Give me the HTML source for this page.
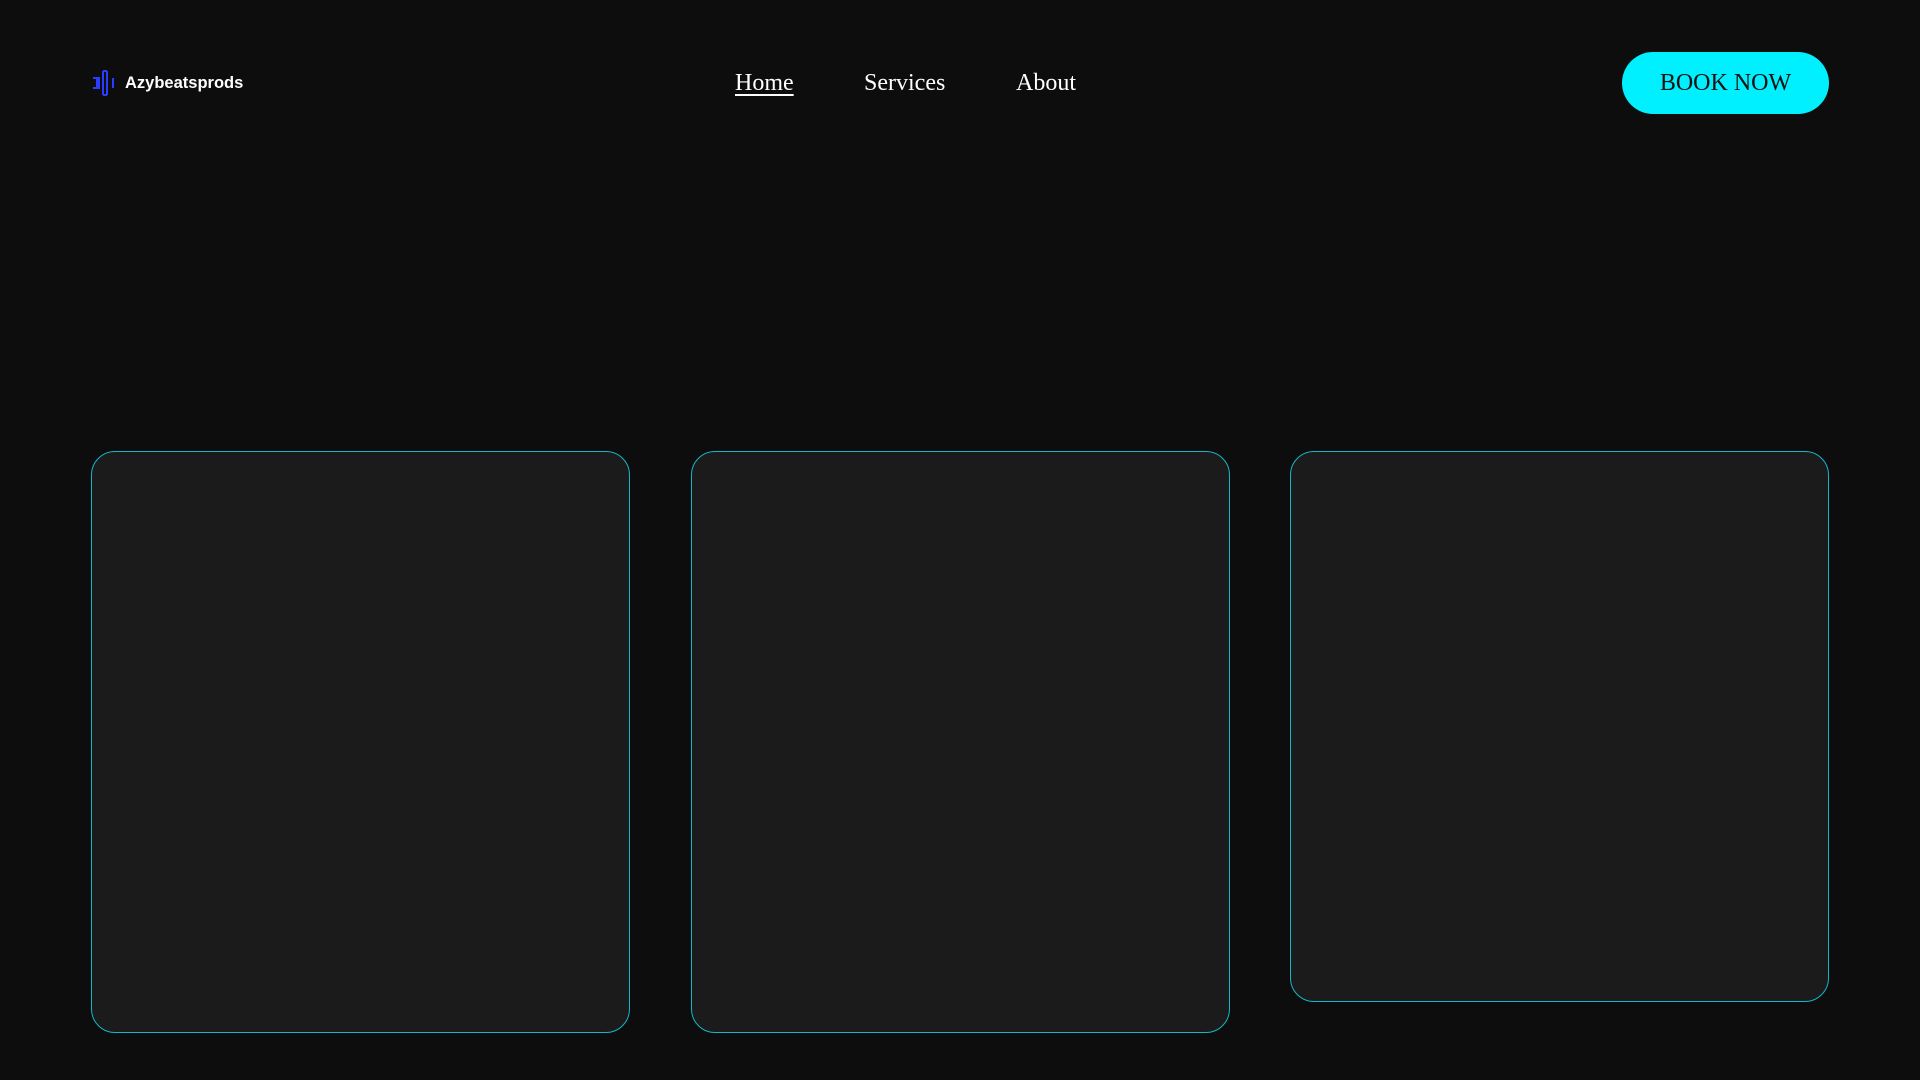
<!DOCTYPE html>
<html><head><style>
body{margin:0;width:1920px;height:1080px;background:#0d0d0d;overflow:hidden;font-family:"Liberation Serif",serif;position:relative}
.logo{position:absolute;left:92px;top:69px;display:flex;align-items:center}
.logo span{font-family:"Liberation Sans",sans-serif;font-weight:bold;color:#fff;font-size:16.5px;margin-left:5px;letter-spacing:0px}
.nav a{position:absolute;top:70px;color:#fff;font-size:24px;text-decoration:none}
.btn{position:absolute;left:1622px;top:52px;width:207px;height:62px;border-radius:31px;background:#00f0ff;color:#111;font-size:24px;display:flex;align-items:center;justify-content:center}
.card{position:absolute;top:451px;width:539px;background:#1b1b1b;border:1px solid #12b8c8;border-radius:24px;box-sizing:border-box}
</style></head><body>
<div class="logo"><svg width="28" height="28" viewBox="0 0 28 28" fill="none" stroke="#2a3cff" stroke-width="2"><path d="M1 9H7V19H1M5 9V19"/><path d="M11 2V26M15 2V26M11 2H15M11 26H15"/><path d="M21 9V19"/></svg><span>Azybeatsprods</span></div>
<div class="nav"><a style="left:735px;text-decoration:underline;text-underline-offset:4px" href="#">Home</a><a style="left:864px" href="#">Services</a><a style="left:1016px" href="#">About</a></div>
<div class="btn">BOOK NOW</div>
<div class="card" style="left:91px;height:582px"></div>
<div class="card" style="left:691px;height:582px"></div>
<div class="card" style="left:1290px;height:551px"></div>
</body></html>
